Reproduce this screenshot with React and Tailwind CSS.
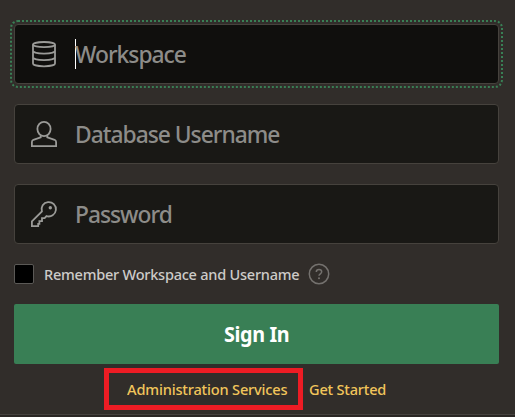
import React from "react";

const iconProps = {
  width: 28,
  height: 28,
  fill: "none",
  stroke: "#9b9b98",
  strokeWidth: 1.8,
  viewBox: "0 0 28 28",
  className: "shrink-0",
};

function DatabaseIcon() {
  return (
    <svg {...iconProps}>
      <ellipse cx="14" cy="4.6" rx="11" ry="2.6" />
      <path d="M3 4.6v18.8c0 1.6 4.8 2.9 11 2.9s11-1.3 11-2.9V4.6M3 10.8c0 1.6 4.8 2.9 11 2.9s11-1.3 11-2.9M3 17.2c0 1.6 4.8 2.9 11 2.9s11-1.3 11-2.9" />
    </svg>
  );
}

function UserIcon() {
  return (
    <svg {...iconProps}>
      <ellipse cx="14" cy="9" rx="6.6" ry="7.2" />
      <path d="M10.7 15.6v1.7L3.4 19.8Q1.9 20.5 1.9 22v4.1h24.2V22q0-1.5-1.5-2.2l-7.3-2.5v-1.7" />
    </svg>
  );
}

function KeyIcon() {
  return (
    <svg {...iconProps}>
      <path d="M11.9 11.5A7.2 7.2 0 1 1 16.5 16.1L14.6 18.2H12v3H9.4v2.6H8.2v2.3H1.9v-4.7Z" />
      <circle cx="20.3" cy="7.8" r="1.7" fill="#9b9b98" stroke="none" />
    </svg>
  );
}

function Field({ icon, label, focused }) {
  return (
    <div
      className={
        "flex h-[60px] items-center rounded-[4px] border border-[#46423d] pl-[15px] " +
        (focused
          ? "bg-[#100f0d] outline-2 outline-dotted outline-[#397f55] outline-offset-2"
          : "bg-[#191815]")
      }
    >
      {icon}
      <div className="ml-[17px] flex h-[30px] items-center">
        {focused && <span className="-mr-px h-[30px] w-px bg-white" />}
        <span className="origin-left scale-x-[0.95] whitespace-nowrap text-[24px] font-medium leading-[30px] tracking-[-1.05px] text-[#8d8c89]">
          {label}
        </span>
      </div>
    </div>
  );
}

export default function App() {
  return (
    <div className="flex h-[417px] w-[515px] flex-col overflow-hidden bg-[#312d2a] font-['Noto_Sans',sans-serif]">
      <main className="flex h-[414px] shrink-0 flex-col pt-6 pr-4 pl-[14px]">
        <div className="flex flex-col gap-5">
          <Field focused icon={<DatabaseIcon />} label="Workspace" />
          <Field icon={<UserIcon />} label="Database Username" />
          <Field icon={<KeyIcon />} label="Password" />
        </div>
        <div className="mt-5 flex h-5 items-center">
          <span className="size-5 rounded-[2px] border border-[#5b5956] bg-black" />
          <span className="ml-[10px] w-[255px] origin-left scale-x-[0.97] whitespace-nowrap text-[15px] font-medium leading-5 tracking-[-0.26px] text-[#cdcbc8]">
            Remember Workspace and Username
          </span>
          <svg className="ml-[9px]" width="22" height="22" viewBox="0 0 22 22" fill="none" stroke="#74716e" strokeWidth="1.5">
            <circle cx="11" cy="11" r="9.7" />
            <path d="M8.3 8.9C8.3 7.2 9.4 6.4 11 6.4s2.7.9 2.7 2.4c0 2-2.7 2-2.7 4" />
            <circle cx="11" cy="15.2" r="1" fill="#74716e" stroke="none" />
          </svg>
        </div>
        <button className="mt-5 h-[60px] rounded-[2px] bg-[#397f55] text-[21px] font-bold leading-[30px] tracking-[-0.4px] text-white">
          <span className="inline-block scale-x-[0.94]">Sign In</span>
        </button>
        <nav className="ml-[90px] mt-1 flex items-center text-[15px] font-medium leading-5 tracking-[-0.2px] text-[#f1c55b]">
          <a className="flex h-[42px] w-[199px] items-center whitespace-nowrap border-[5px] border-[#ed1c24] pl-[18px]">
            <span className="origin-left scale-x-[0.975]">Administration Services</span>
          </a>
          <a className="ml-[6px] origin-left scale-x-[0.97] whitespace-nowrap">Get Started</a>
        </nav>
      </main>
      <div className="h-[3px] border-t border-[#45413e] bg-[#2a2624]" />
    </div>
  );
}
